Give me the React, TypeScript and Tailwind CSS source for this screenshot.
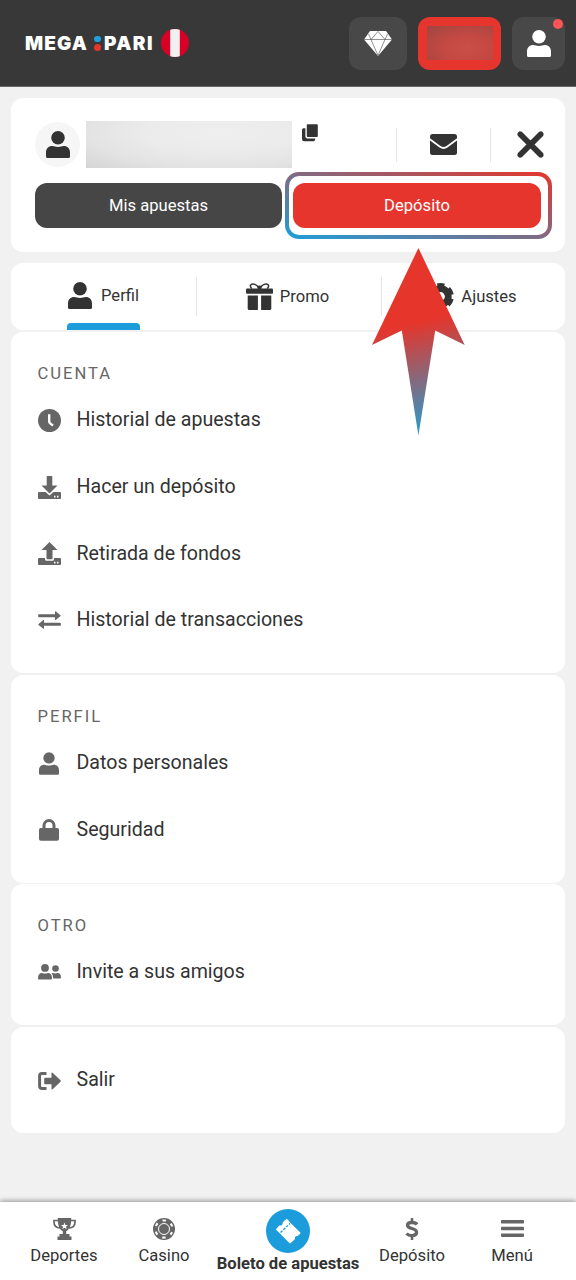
import React from 'react'

type IconProps = { className?: string }

const UserIcon = ({ className }: IconProps) => (
    <svg viewBox="0 0 24 27" fill="currentColor" className={className}>
        <circle cx="12" cy="6.8" r="6.8" />
        <path d="M0 25.5V21.5C0 17.5 2.5 15 6.3 15C8.3 15 9.5 16 12 16C14.5 16 15.7 15 17.7 15C21.5 15 24 17.5 24 21.5V25.5Q24 27 22.5 27H1.5Q0 27 0 25.5Z" />
    </svg>
)

const GemIcon = () => (
    <svg viewBox="0 0 28 25" className="w-7 h-[25px]">
        <path d="M6 0H22L28 8.5L14 25L0 8.5Z" fill="#fff" />
        <path d="M0 8.5H28M14 .5L7 8.5L14 24.5L21 8.5L14 .5M4.5 3L7 8.5M23.5 3L21 8.5" fill="none" stroke="#484848" strokeWidth=".6" />
    </svg>
)

const CopyIcon = () => (
    <svg viewBox="0 0 16 18" fill="#333" className="w-4 h-[18px]">
        <rect x="4.8" y=".3" width="11" height="12.7" rx="1" />
        <path d="M1.5 4.2H3.4V12.6Q3.4 14.4 5.2 14.4H13.2Q13.2 17.3 11 17.3H2.2Q0 17.3 0 15V5.8Q0 4.2 1.5 4.2Z" />
    </svg>
)

const MailIcon = () => (
    <svg viewBox="0 0 27 21" fill="#333" className="w-[27px] h-[21px]">
        <path d="M2.5 0H24.5Q27 0 27 2.5V4.2L16.5 12Q13.5 14.2 10.5 12L0 4.2V2.5Q0 0 2.5 0Z" />
        <path d="M0 6.5L9.5 13.6Q13.5 16.5 17.5 13.6L27 6.5V18.5Q27 21 24.5 21H2.5Q0 21 0 18.5Z" />
    </svg>
)

const CloseIcon = () => (
    <svg viewBox="0 0 27 27" className="w-[27px] h-[27px]">
        <path d="M2.5 2.5L24.5 24.5M24.5 2.5L2.5 24.5" stroke="#333" strokeWidth="5.6" />
        <path d="M3 3L24 24M24 3L3 24" stroke="#333" strokeWidth="5" strokeLinecap="round" />
    </svg>
)

const GiftIcon = () => (
    <svg viewBox="0 0 27 27" fill="#333" className="w-[27px] h-[27px]">
        <rect x="0" y="5.5" width="27" height="5.3" rx="1" />
        <path d="M1.7 12.5H11.9V27H3.2Q1.7 27 1.7 25.5Z" />
        <path d="M15.1 12.5H25.3V25.5Q25.3 27 23.8 27H15.1Z" />
        <path d="M12.5 4.5C10.5 1.3 7 .3 5.3 1.3C3.8 2.3 4.2 4.2 6 5.5M14.5 4.5C16.5 1.3 20 .3 21.7 1.3C23.2 2.3 22.8 4.2 21 5.5" fill="none" stroke="#333" strokeWidth="1.5" />
        <rect x="11.5" y="2.5" width="4" height="4" rx="1.5" />
    </svg>
)

const GearIcon = () => (
    <svg viewBox="0 0 27 27" className="w-[27px] h-[27px]">
        <circle cx="13.5" cy="13.5" r="7.8" fill="none" stroke="#333" strokeWidth="6.8" />
        <circle cx="13.5" cy="13.5" r="10.75" fill="none" stroke="#333" strokeWidth="5.4" strokeDasharray="6.6 4.657" strokeDashoffset="-2.33" />
    </svg>
)

const ClockIcon = () => (
    <svg viewBox="0 0 23 23" className="w-[23px] h-[23px]">
        <circle cx="11.5" cy="11.5" r="11.5" fill="#666" />
        <path d="M11.2 5.2V12.5Q11.2 13.6 12.2 14.4L15 16.6" fill="none" stroke="#fff" strokeWidth="2.4" />
    </svg>
)

const DownloadIcon = () => (
    <svg viewBox="0 0 23 23" fill="#666" className="w-[23px] h-[23px]">
        <path d="M9.5 0H13.5Q14.3 0 14.3 .8V9.5H19.5L11.5 17.5L3.5 9.5H8.7V.8Q8.7 0 9.5 0Z" />
        <path d="M1 16H7.5L11.5 19.5L15.5 16H22Q23 16 23 17V22Q23 23 22 23H1Q0 23 0 22V17Q0 16 1 16ZM16 19.8V21.4H17.5V19.8ZM19 19.8V21.4H20.5V19.8Z" fillRule="evenodd" />
    </svg>
)

const UploadIcon = () => (
    <svg viewBox="0 0 23 23" fill="#666" className="w-[23px] h-[23px]">
        <path d="M11.5 0L19.5 8H14.5V16.5Q14.5 17.3 13.7 17.3H9.3Q8.5 17.3 8.5 16.5V8H3.5Z" />
        <path d="M1 16H7V17.2Q7 18.8 8.6 18.8H14.4Q16 18.8 16 17.2V16H22Q23 16 23 17V22Q23 23 22 23H1Q0 23 0 22V17Q0 16 1 16ZM16 19.8V21.4H17.5V19.8ZM19 19.8V21.4H20.5V19.8Z" fillRule="evenodd" />
    </svg>
)

const SwapIcon = () => (
    <svg viewBox="0 0 23 18" fill="#666" className="w-[23px] h-[18px]">
        <path d="M.8 3.2H17V.8Q17 -.3 18 .5L22.4 4.2Q23 4.7 22.4 5.2L18 8.8Q17 9.5 17 8.4V6.2H.8Q.2 6.2 .2 5.6V3.8Q.2 3.2 .8 3.2Z" />
        <path d="M22.2 11.8H6V9.5Q6 8.4 5 9.2L.6 12.9Q0 13.4 .6 13.9L5 17.5Q6 18.2 6 17.1V14.8H22.2Q22.8 14.8 22.8 14.2V12.4Q22.8 11.8 22.2 11.8Z" />
    </svg>
)

const LockIcon = () => (
    <svg viewBox="0 0 20 22" className="w-5 h-[22px]">
        <path d="M5 10V6.5A5 5 0 0 1 15 6.5V10" fill="none" stroke="#666" strokeWidth="3" />
        <rect x="0" y="9" width="20" height="12.7" rx="1.8" fill="#666" />
    </svg>
)

const FriendsIcon = () => (
    <svg viewBox="0 0 23 16" fill="#666" className="w-[23px] h-4">
        <circle cx="7" cy="3.9" r="3.9" />
        <path d="M0 14.5Q0 9 4 9Q7 10 10 9Q14 9 14 14.5Q14 15.5 13 15.5H1Q0 15.5 0 14.5Z" />
        <circle cx="17.5" cy="4.5" r="3.3" />
        <path d="M13.5 9.3Q14.5 8.7 17.5 9.5Q23 7.8 23 13.8Q23 14.6 22.2 14.6H15.2Q15.5 11 13.5 9.3Z" />
    </svg>
)

const ExitIcon = () => (
    <svg viewBox="0 0 23 18" className="w-[23px] h-[18px]">
        <path d="M8.5 1.6H4Q1.6 1.6 1.6 4V14Q1.6 16.4 4 16.4H8.5" fill="none" stroke="#666" strokeWidth="3" />
        <path d="M7 5.8H13.5V1.2Q13.5 -.2 14.6 .8L22.5 8.2Q23.2 9 22.5 9.8L14.6 17.2Q13.5 18.2 13.5 16.8V12.2H7Q6.2 12.2 6.2 11.4V6.6Q6.2 5.8 7 5.8Z" fill="#666" />
    </svg>
)

const TrophyIcon = () => (
    <svg viewBox="0 0 23 22" fill="#666" className="w-[23px] h-[22px]">
        <path d="M5 2.5H1V4C1 7.5 3 9.8 7 10M18 2.5H22V4C22 7.5 20 9.8 16 10" fill="none" stroke="#666" strokeWidth="1.7" />
        <path d="M4.8 0H18.2C18.5 7 16.5 11.5 13.2 13.2V16H16.5V18.5H18.5V22H4.5V18.5H6.5V16H9.8V13.2C6.5 11.5 4.5 7 4.8 0Z" />
        <path d="M11.5 4.5L12.4 6.9L15 7L13 8.700L13.700 11.200L11.500 9.800L9.300 11.200L10 8.700L8 7L10.600 6.900Z" fill="#fff" />
    </svg>
)

const ChipIcon = () => (
    <svg viewBox="0 0 22 22" className="w-[22px] h-[22px]">
        <circle cx="11" cy="11" r="11" fill="#666" />
        <circle cx="11" cy="11" r="8.6" fill="none" stroke="#fff" strokeWidth="2" strokeDasharray="3.4 5.606" strokeDashoffset="1.7" transform="rotate(30 11 11)" />
        <circle cx="11" cy="11" r="5.5" fill="none" stroke="#fff" strokeWidth="1" />
    </svg>
)

const TicketIcon = () => (
    <svg viewBox="0 0 26 26" className="w-[26px] h-[26px]">
        <path d="M1.5 10.5L4.3 7.5Q7.8 8 7.8 4.200L11 1.300Q12 .5 12.800 1.400L15.300 4.800L25.300 14.600Q25.800 15.200 25.200 15.800L22.600 18Q19.500 17.800 20 21L15.800 25Q15 25.600 14.300 25L4.500 15L1.300 12Q.7 11.200 1.500 10.500Z" fill="#fff" />
        <path d="M5.500 14.500L15 5.500" stroke="#1c9cda" strokeWidth="1.300" strokeDasharray="2.600 1.300" />
    </svg>
)

const DollarIcon = () => (
    <svg viewBox="0 0 14 22" className="w-3.5 h-[22px]">
        <path d="M12 6.5C10.5 4.3 3 3.2 2.5 7C2.2 11.5 11.8 9.5 11.6 14.5C11.2 18.5 4 18.3 1.5 15.5" fill="none" stroke="#666" strokeWidth="3.3" />
        <path d="M7 .8V4.5M7 18V21.3" stroke="#666" strokeWidth="2.6" strokeLinecap="round" />
    </svg>
)

const MenuIcon = () => (
    <svg viewBox="0 0 23 17" fill="#666" className="w-[23px] h-[17px]">
        <rect width="23" height="3.5" rx=".8" />
        <rect y="6.7" width="23" height="3.5" rx=".8" />
        <rect y="13.4" width="23" height="3.5" rx=".8" />
    </svg>
)

const sections = [
    {
        title: 'CUENTA',
        items: [
            { label: 'Historial de apuestas', icon: <ClockIcon /> },
            { label: 'Hacer un depósito', icon: <DownloadIcon /> },
            { label: 'Retirada de fondos', icon: <UploadIcon /> },
            { label: 'Historial de transacciones', icon: <SwapIcon /> },
        ],
    },
    {
        title: 'PERFIL',
        items: [
            { label: 'Datos personales', icon: <UserIcon className="w-5 h-[23px] text-[#666]" /> },
            { label: 'Seguridad', icon: <LockIcon /> },
        ],
    },
    { title: 'OTRO', items: [{ label: 'Invite a sus amigos', icon: <FriendsIcon /> }] },
    { title: '', items: [{ label: 'Salir', icon: <ExitIcon /> }] },
]

const navItems = [
    { label: 'Deportes', icon: <TrophyIcon /> },
    { label: 'Casino', icon: <ChipIcon /> },
    { label: 'Boleto de apuestas', icon: <TicketIcon />, main: true },
    { label: 'Depósito', icon: <DollarIcon /> },
    { label: 'Menú', icon: <MenuIcon /> },
]

const Header = () => (
    <header className="h-[87px] shrink-0 bg-[#383838] border-b border-[#666] flex items-center pl-[25px] pr-[11px]">
        <div className="flex items-center text-white font-['Inter'] font-black text-[19px] leading-none">
            <span className="w-[69px] tracking-[1.1px]">MEGA</span>
            <span className="flex flex-col gap-[2px] w-[10px]">
                <span className="w-[6.5px] h-[6.5px] rounded-full bg-[#209fdc]" />
                <span className="w-[6.5px] h-[6.5px] rounded-full bg-[#e6352b]" />
            </span>
            <span className="w-[57px] tracking-[1.5px]">PARI</span>
            <svg viewBox="0 0 28 28" className="w-7 h-7">
                <clipPath id="flag"><circle cx="14" cy="14" r="14" /></clipPath>
                <g clipPath="url(#flag)">
                    <rect width="28" height="28" fill="#d80027" />
                    <rect x="9.2" width="9.6" height="28" fill="#f0f0f0" />
                </g>
            </svg>
        </div>
        <div className="ml-auto flex gap-[11px]">
            <div className="w-[58px] h-[53px] rounded-xl bg-[#484848] flex items-center justify-center">
                <GemIcon />
            </div>
            <div className="w-[83px] h-[53px] rounded-xl bg-[#e6352d] flex items-center justify-center">
                <div className="w-[66px] h-[34px] bg-[radial-gradient(ellipse_at_60%_65%,#c94f49,#c54943_40%,#a04540_100%)]" />
            </div>
            <div className="relative w-[53px] h-[53px] rounded-xl bg-[#484848] flex items-center justify-center">
                <UserIcon className="w-6 h-[27px] text-white" />
                <span className="absolute top-[2.5px] right-[2.5px] w-[10px] h-[10px] rounded-full bg-[#ff5457]" />
            </div>
        </div>
    </header>
)

const ProfileCard = () => (
    <section className="h-[154px] rounded-xl bg-white pt-[23px] pl-6 pr-[13px]">
        <div className="flex items-center h-[47px]">
            <div className="w-[45px] h-[45px] rounded-full bg-[#f6f6f6] flex items-center justify-center">
                <UserIcon className="w-6 h-[27px] text-[#333]" />
            </div>
            <div className="ml-[6px] mr-[10px] w-[206px] h-[47px] bg-[radial-gradient(ellipse_at_65%_25%,#efefef,#ebebeb_40%,#e3e3e3_70%,#cfcfcf_110%)]" />
            <div className="self-start pt-[3px]"><CopyIcon /></div>
            <div className="ml-auto w-px h-[34px] bg-[#e6e6e6]" />
            <div className="w-[93px] flex justify-center"><MailIcon /></div>
            <div className="w-px h-[34px] bg-[#e6e6e6]" />
            <div className="ml-[26px] mr-2"><CloseIcon /></div>
        </div>
        <div className="mt-1 flex items-center gap-[3px] text-[16.6px] text-white">
            <button className="w-[247px] h-[45px] pt-[2px] rounded-xl bg-[#464646]">Mis apuestas</button>
            <div className="w-[267px] h-[67px] rounded-[14px] p-1 bg-[linear-gradient(to_top_right,#1c9fda,#e6352b)]">
                <div className="h-full rounded-[10px] bg-white flex items-center justify-center pr-[3px]">
                    <button className="w-[248px] h-[45px] pt-[2px] rounded-xl bg-[#e6352d]">Depósito</button>
                </div>
            </div>
        </div>
    </section>
)

const Tabs = () => (
    <section className="mt-[11px] h-[67px] rounded-xl bg-white flex items-center text-[16.6px] text-[#333]">
        <div className="w-[185px] h-full flex justify-center">
            <div className="h-full flex flex-col">
                <div className="flex-1 flex items-center gap-[9px] pt-[5px] px-[1px]">
                    <UserIcon className="w-6 h-[27px] text-[#333]" />
                    <span className="pt-[2px]">Perfil</span>
                </div>
                <div className="h-[7px] rounded-t bg-[#1c9cda]" />
            </div>
        </div>
        <div className="w-px h-[39px] bg-[#e6e6e6]" />
        <div className="w-[184px] pr-[3px] pb-px flex items-center justify-center gap-[7px]">
            <GiftIcon />
            <span className="pt-[2px]">Promo</span>
        </div>
        <div className="w-px h-[39px] bg-[#e6e6e6]" />
        <div className="flex-1 flex items-center justify-center gap-[7px] pr-[3px] pb-px">
            <GearIcon />
            <span className="pt-[2px]">Ajustes</span>
        </div>
    </section>
)

const BottomNav = () => (
    <nav className="mt-auto h-[78px] px-[14px] bg-white grid grid-cols-[100px_100px_148px_100px_100px] shadow-[0_-1px_5px_rgba(0,0,0,0.4)]">
        {navItems.map((item) => (
            <div key={item.label} className="flex flex-col items-center">
                {item.main ? (
                    <>
                        <div className="mt-[7px] w-11 h-11 shrink-0 rounded-full bg-[#1c9cda] flex items-center justify-center">{item.icon}</div>
                        <span className="mt-px text-[16.6px] leading-5 font-bold text-[#333] whitespace-nowrap">{item.label}</span>
                    </>
                ) : (
                    <>
                        <div className="mt-[15px] h-[23px] flex items-center">{item.icon}</div>
                        <span className="mt-[6px] text-[16.6px] leading-5 text-[#333]">{item.label}</span>
                    </>
                )}
            </div>
        ))}
    </nav>
)

const App = () => {
    return (
        <div className="relative w-[576px] h-[1280px] overflow-hidden bg-[#f1f1f1] flex flex-col font-['Roboto',sans-serif]">
            <Header />
            <main className="px-[11px] pt-[11px]">
                <ProfileCard />
                <Tabs />
                <div className="mt-[2px] flex flex-col gap-[1.5px]">
                    {sections.map((section, i) => (
                        <section key={i} className="rounded-xl bg-white pt-5 pb-[20px] last:pb-[19.5px] pl-[26.5px]">
                            {section.title && (
                                <h2 className="h-[34.5px] pt-[13px] text-[16.6px] leading-[18px] tracking-[2px] text-[#666]">{section.title}</h2>
                            )}
                            {section.items.map((item) => (
                                <div key={item.label} className="h-[66.7px] flex items-center text-[19.6px] text-[#333]">
                                    <span className="w-[23px] mr-4 flex justify-center pt-px">{item.icon}</span>
                                    {item.label}
                                </div>
                            ))}
                        </section>
                    ))}
                </div>
            </main>
            <BottomNav />

            {/* pointer towards the deposit button */}
            <svg viewBox="0 0 93 188" className="absolute left-[372px] top-[248px] w-[93px] h-[188px]">
                <defs>
                    <linearGradient id="pointer" gradientUnits="userSpaceOnUse" x1="38" y1="76" x2="62" y2="182">
                        <stop offset="0" stopColor="#e6352b" />
                        <stop offset="1" stopColor="#2b9aca" />
                    </linearGradient>
                </defs>
                <path d="M46.4 0L92.7 97L63.2 82.5L46.4 187.5L29.8 82.5L0 97Z" fill="url(#pointer)" />
            </svg>
        </div>
    )
}

export default App
